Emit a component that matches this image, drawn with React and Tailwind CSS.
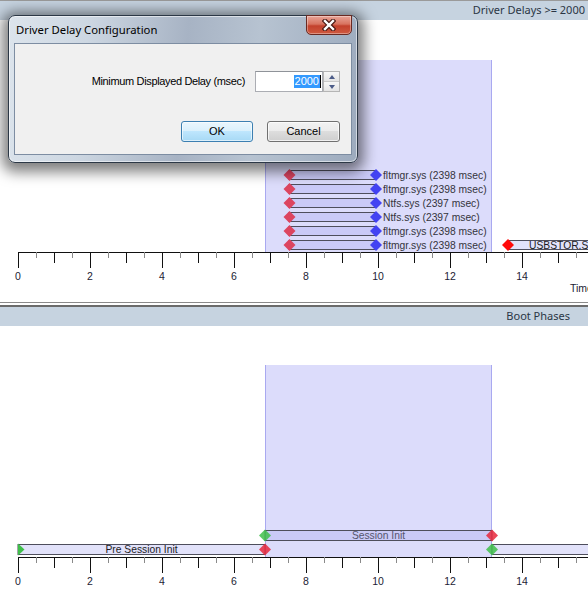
import React from "react"

const X = (t) => 18 + t * 36
const TICKS = Array.from({ length: 34 }, (_, i) => i)

function Axis({ y, showTime }) {
  return (
    <g>
      <line x1={18} y1={y + 0.5} x2={600} y2={y + 0.5} stroke="#111" strokeWidth={1} />
      {TICKS.map((i) => {
        const x = Math.round(X(i / 2)) + 0.5
        const long = i % 4 === 0
        const mid = i % 4 === 2
        const len = long ? 16 : mid ? 11 : 6
        return (
          <line
            key={i}
            x1={x}
            y1={y}
            x2={x}
            y2={y + len}
            stroke={long || mid ? "#111" : "#8a8a8a"}
            strokeWidth={1}
          />
        )
      })}
      {TICKS.filter((i) => i % 4 === 0 && i < 32).map((i) => (
        <text
          key={i}
          x={X(i / 2)}
          y={y + 28}
          textAnchor="middle"
          fontSize="10.5"
          fill="#1c1c34"
          fontFamily="'Liberation Sans', Arial, sans-serif"
        >
          {i / 2}
        </text>
      ))}
      {showTime ? (
        <text x={570} y={y + 40} fontSize="10.5" fill="#1c1c34" fontFamily="'Liberation Sans', Arial, sans-serif">
          Time
        </text>
      ) : null}
    </g>
  )
}

function Diamond({ x, y, color, r = 6, opacity = 1 }) {
  return (
    <polygon
      points={`${x},${y - r} ${x + r},${y} ${x},${y + r} ${x - r},${y}`}
      fill={color}
      opacity={opacity}
    />
  )
}

function Bar({ x1, x2, top, h = 9 }) {
  return (
    <rect
      x={x1}
      y={top + 0.5}
      width={x2 - x1}
      height={h}
      fill="rgba(165,165,240,0.32)"
      stroke="#4e4e5c"
      strokeWidth={1}
    />
  )
}

function Shade({ top, bottom }) {
  return (
    <g>
      <rect x={265} y={top} width={227} height={bottom - top} fill="#dcdcfb" />
      <line x1={265.5} y1={top} x2={265.5} y2={bottom} stroke="#a9a9f0" />
      <line x1={491.5} y1={top} x2={491.5} y2={bottom} stroke="#a9a9f0" />
    </g>
  )
}

const drivers = [
  "fltmgr.sys (2398 msec)",
  "fltmgr.sys (2398 msec)",
  "Ntfs.sys (2397 msec)",
  "Ntfs.sys (2397 msec)",
  "fltmgr.sys (2398 msec)",
  "fltmgr.sys (2398 msec)",
]

function DriverChart() {
  return (
    <svg width="588" height="282" className="block">
      <Shade top={40} bottom={232} />
      {drivers.map((label, i) => {
        const top = 150 + i * 14
        const cy = top + 5
        return (
          <g key={i}>
            <Bar x1={289} x2={376} top={top} />
            <Diamond x={289.5} y={cy} color="#dc4560" />
            <Diamond x={376} y={cy} color="#4343f2" />
            <text
              x={383}
              y={cy + 3.6}
              fontSize="10.3"
              fill="#34343c"
              fontFamily="'Liberation Sans', Arial, sans-serif"
            >
              {label}
            </text>
          </g>
        )
      })}
      <Bar x1={508} x2={600} top={220} />
      <Diamond x={508} y={225} color="#ff0a0a" />
      <text x={529} y={228.6} fontSize="10.3" fill="#1c1c24" fontFamily="'Liberation Sans', Arial, sans-serif">
        USBSTOR.SYS (2012 msec)
      </text>
      <Axis y={232} showTime />
    </svg>
  )
}

function PhaseChart() {
  return (
    <svg width="588" height="263" className="block">
      <Shade top={39} bottom={231} />
      <Bar x1={265} x2={492} top={204} h={10} />
      <text
        x={378.5}
        y={213}
        textAnchor="middle"
        fontSize="10.3"
        fill="#55556e"
        fontFamily="'Liberation Sans', Arial, sans-serif"
      >
        Session Init
      </text>
      <Bar x1={18} x2={265} top={218} h={10} />
      <Bar x1={492} x2={600} top={218} h={10} />
      <text
        x={141.5}
        y={227}
        textAnchor="middle"
        fontSize="10.3"
        fill="#1c1c24"
        fontFamily="'Liberation Sans', Arial, sans-serif"
      >
        Pre Session Init
      </text>
      <polygon points="18,217.5 24.5,223.5 18,229.5" fill="#3fbf4a" />
      <Diamond x={265} y={223.5} color="#e8283c" opacity={0.85} />
      <Diamond x={265} y={209.5} color="#3fbf4a" opacity={0.85} />
      <Diamond x={492} y={209.5} color="#e8283c" opacity={0.85} />
      <Diamond x={492} y={223.5} color="#3fbf4a" opacity={0.85} />
      <Axis y={231} />
    </svg>
  )
}

function DelayDialog() {
  return (
    <div className="absolute left-[8px] top-[15px] h-[148px] w-[350px] rounded-[7px] border border-[#2c3846] bg-[linear-gradient(95deg,#dce4ec_0%,#cdd7e2_22%,#a7b3c4_50%,#b7c3d1_70%,#9dabbe_100%)] shadow-[0_3px_14px_6px_rgba(0,0,0,0.5),inset_0_0_0_1px_rgba(255,255,255,0.55)]">
      <div className="flex h-[27px] items-center pl-[7px] pt-[1px] font-['Noto_Sans',sans-serif] text-[11.3px] text-black">
        Driver Delay Configuration
      </div>
      <div className="absolute right-[5px] top-[-1px] flex h-[20px] w-[46px] items-center justify-center rounded-b-[5px] border border-[#6a2a22] bg-[linear-gradient(#e9a497_0%,#d8735f_45%,#c3412c_55%,#cf5a40_100%)] shadow-[inset_0_0_0_1px_rgba(255,255,255,0.35)]">
        <svg width="14" height="12" viewBox="0 0 14 12">
          <path d="M3 2 L11 10 M11 2 L3 10" stroke="#4a1a14" strokeWidth="4.6" strokeLinecap="square" />
          <path d="M3 2 L11 10 M11 2 L3 10" stroke="#ffffff" strokeWidth="2.4" strokeLinecap="square" />
        </svg>
      </div>
      <div className="ml-[5px] flex h-[112px] w-[338px] flex-col border border-[#7d8da2] bg-[#f0f0f0] font-['Liberation_Sans',Arial,sans-serif] text-[11px] text-black">
        <div className="mt-[27px] flex items-center justify-end pr-[11px]">
          <span className="mr-[10px] tracking-[-0.35px]">Minimum Displayed Delay (msec)</span>
          <div className="flex h-[21px] w-[68px] items-center justify-end border border-[#abadb3] border-t-[#8f9399] bg-white pr-[1px]">
            <span className="bg-[#3399ff] px-[1px] leading-[13px] text-white">2000</span>
            <span className="h-[13px] w-px bg-black" />
          </div>
          <div className="flex h-[21px] w-[17px] flex-col border border-[#b5b5b5]">
            <div className="flex flex-1 items-center justify-center border-b border-[#c9c9c9] bg-[linear-gradient(#f7f7f7,#e4e4e4)]">
              <div className="h-0 w-0 border-x-[3.5px] border-b-[4px] border-x-transparent border-b-[#4c5c88]" />
            </div>
            <div className="flex flex-1 items-center justify-center bg-[linear-gradient(#f7f7f7,#e4e4e4)]">
              <div className="h-0 w-0 border-x-[3.5px] border-t-[4px] border-x-transparent border-t-[#4c5c88]" />
            </div>
          </div>
        </div>
        <div className="mt-[29px] flex justify-end gap-[14px] pr-[11px]">
          <button className="h-[21px] w-[72px] rounded-[3px] border border-[#3c7fb1] bg-[linear-gradient(#eaf6fd_0%,#d9f0fc_50%,#bee6fd_50%,#a7d9f5_100%)] text-[11px] shadow-[inset_0_0_0_1px_rgba(255,255,255,0.6)]">
            OK
          </button>
          <button className="h-[21px] w-[73px] rounded-[3px] border border-[#707070] bg-[linear-gradient(#f2f2f2_0%,#ebebeb_50%,#dddddd_50%,#cfcfcf_100%)] text-[11px] shadow-[inset_0_0_0_1px_rgba(255,255,255,0.7)]">
            Cancel
          </button>
        </div>
      </div>
    </div>
  )
}

export default function App() {
  return (
    <div className="relative h-[589px] w-[588px] overflow-hidden bg-white">
      <div className="flex h-[20px] items-center justify-end border-t border-[#9a9a9a] bg-[#c6d3e0] pr-[3px] font-['Noto_Sans',sans-serif] text-[11px] text-[#2b3645]">
        Driver Delays &gt;= 2000
      </div>
      <DriverChart />
      <div className="h-px bg-[#8a8a8a]" />
      <div className="h-[2px] bg-white" />
      <div className="h-[2px] bg-[#6b6b6b]" />
      <div className="flex h-[19px] items-center justify-end bg-[#c6d3e0] pr-[18px] font-['Noto_Sans',sans-serif] text-[11px] text-[#2b3645]">
        Boot Phases
      </div>
      <PhaseChart />
      <DelayDialog />
    </div>
  )
}
